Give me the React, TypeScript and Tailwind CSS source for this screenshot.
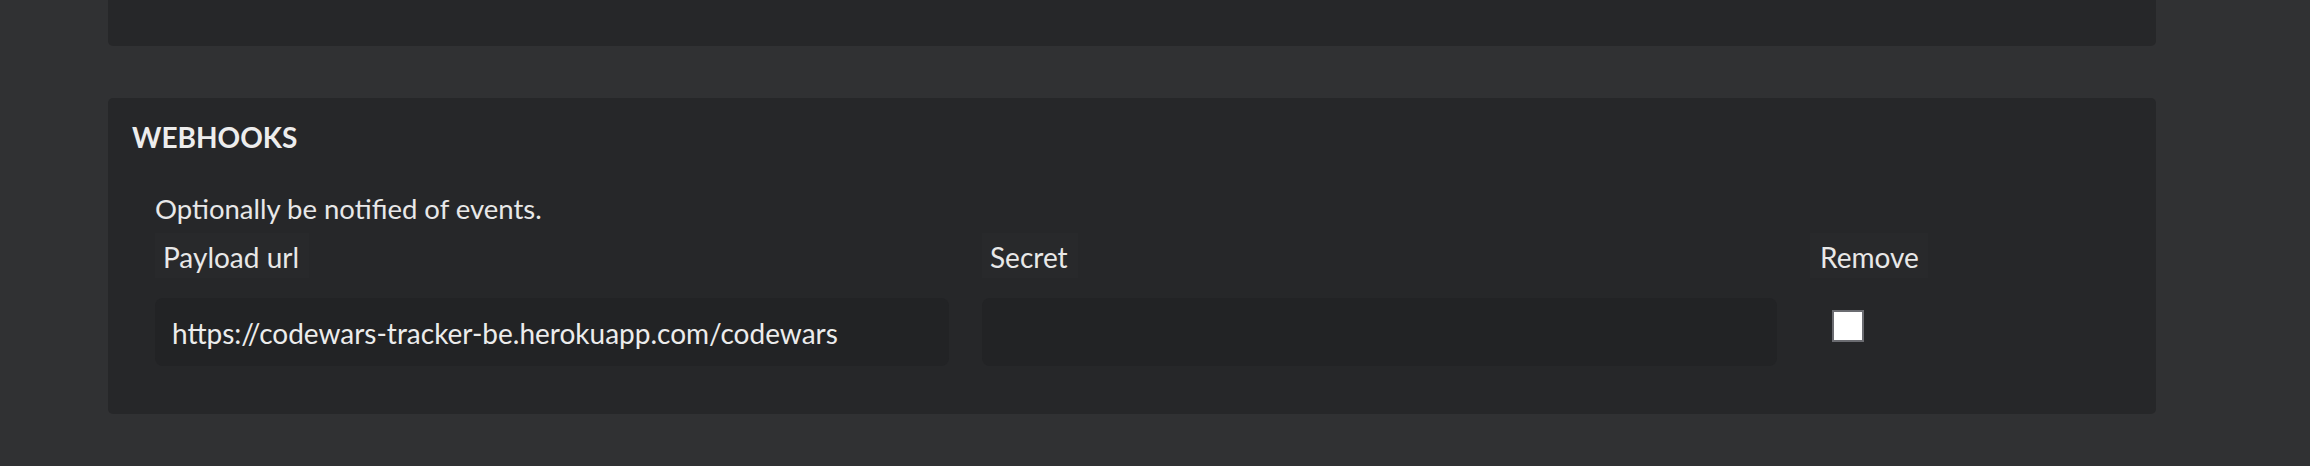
import { useState } from "react";

const font = { fontFamily: "Lato, 'Open Sans', sans-serif" };

export default function App() {
  const [url, setUrl] = useState("https://codewars-tracker-be.herokuapp.com/codewars");
  const [secret, setSecret] = useState("");
  const [remove, setRemove] = useState(false);

  return (
    <div className="min-h-[466px] w-full bg-[#303133] pl-[108px] text-[#e8e8e8]" style={font}>
      {/* tail of the panel above */}
      <div className="h-[46px] w-[2048px] rounded-b-[5px] bg-[#262729]" />

      <section className="mt-[52px] h-[316px] w-[2048px] rounded-[5px] bg-[#262729] pl-[24px] pt-[22px]">
        <h2 className="text-[28px] font-bold leading-[34px] text-[#ededed]">WEBHOOKS</h2>

        <div className="mt-[39px] pl-[23px]">
          <p className="text-[27.5px] leading-[32px]">Optionally be notified of events.</p>

          <div className="mt-[8px] grid grid-cols-[794px_795px_auto] gap-x-[33px] gap-y-[20px]">
            <div>
              <span className="inline-block h-[45px] bg-[#28292b] pl-[8px] pr-[10px] pt-[8px] text-[28px] leading-[32px]">
                Payload url
              </span>
            </div>
            <div>
              <span className="inline-block h-[45px] bg-[#28292b] pl-[8px] pr-[10px] pt-[8px] text-[28px] leading-[32px]">
                Secret
              </span>
            </div>
            <div>
              <span className="inline-block h-[45px] bg-[#28292b] pl-[10px] pr-[9px] pt-[8px] text-[28px] leading-[32px]">
                Remove
              </span>
            </div>

            <input
              value={url}
              onChange={(e) => setUrl(e.target.value)}
              className="h-[68px] w-full rounded-[8px] bg-[#222325] px-[17px] pt-[1px] text-[28px] text-[#ececec] outline-none"
              style={font}
            />
            <input
              value={secret}
              onChange={(e) => setSecret(e.target.value)}
              className="h-[68px] w-full rounded-[8px] bg-[#222325] px-[17px] pt-[1px] text-[28px] text-[#ececec] outline-none"
              style={font}
            />
            <div className="pl-[22px] pt-[12px]">
              <input
                type="checkbox"
                checked={remove}
                onChange={(e) => setRemove(e.target.checked)}
                className="block h-[32px] w-[32px] appearance-none border-2 border-[#6b6c71] bg-white checked:bg-[#3b82f6]"
              />
            </div>
          </div>
        </div>
      </section>
    </div>
  );
}
